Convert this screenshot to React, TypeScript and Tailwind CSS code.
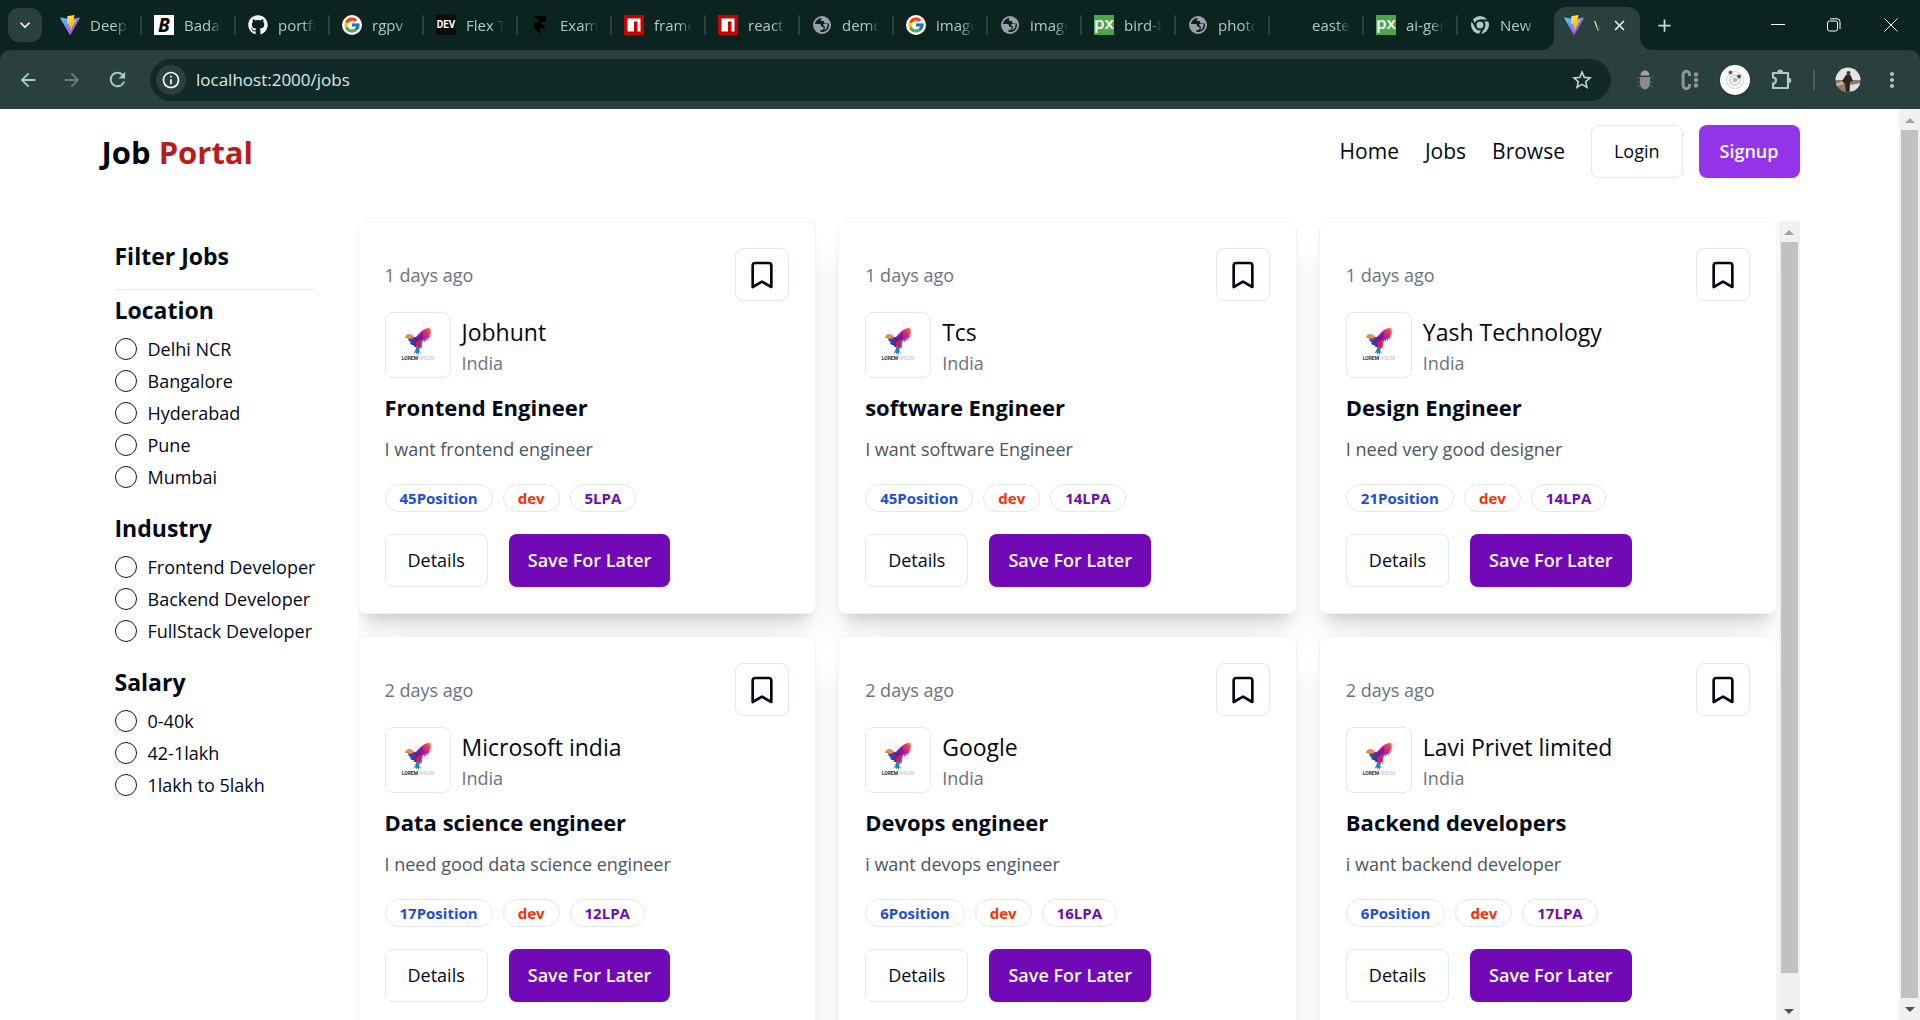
import { Bookmark } from 'lucide-react';
import { FaGithub } from 'react-icons/fa';
import { FcGoogle } from 'react-icons/fc';
import { SiFramer } from 'react-icons/si';
import {
  MdAdd,
  MdArrowBack,
  MdArrowForward,
  MdClose,
  MdInfoOutline,
  MdKeyboardArrowDown,
  MdMoreVert,
  MdRefresh,
  MdStarBorder,
} from 'react-icons/md';

type Tab = { icon: string; title: string };

const tabs: Tab[] = [
  { icon: 'vite', title: 'Deepa' },
  { icon: 'badal', title: 'Badal' },
  { icon: 'github', title: 'portfo' },
  { icon: 'google', title: 'rgpv' },
  { icon: 'dev', title: 'Flex T' },
  { icon: 'framer', title: 'Exam' },
  { icon: 'npm', title: 'frame' },
  { icon: 'npm', title: 'react-' },
  { icon: 'globe', title: 'demo' },
  { icon: 'google', title: 'image' },
  { icon: 'globe', title: 'image' },
  { icon: 'px', title: 'bird-8' },
  { icon: 'globe', title: 'photo' },
  { icon: 'none', title: 'easte' },
  { icon: 'px', title: 'ai-gen' },
  { icon: 'chrome', title: 'New T' },
];

const filters = [
  { name: 'Location', options: ['Delhi NCR', 'Bangalore', 'Hyderabad', 'Pune', 'Mumbai'] },
  { name: 'Industry', options: ['Frontend Developer', 'Backend Developer', 'FullStack Developer'] },
  { name: 'Salary', options: ['0-40k', '42-1lakh', '1lakh to 5lakh'] },
];

const jobs = [
  { age: '1 days ago', company: 'Jobhunt', title: 'Frontend Engineer', text: 'I want frontend engineer', count: 45, pay: 5 },
  { age: '1 days ago', company: 'Tcs', title: 'software Engineer', text: 'I want software Engineer', count: 45, pay: 14 },
  { age: '1 days ago', company: 'Yash Technology', title: 'Design Engineer', text: 'I need very good designer', count: 21, pay: 14 },
  { age: '2 days ago', company: 'Microsoft india', title: 'Data science engineer', text: 'I need good data science engineer', count: 17, pay: 12 },
  { age: '2 days ago', company: 'Google', title: 'Devops engineer', text: 'i want devops engineer', count: 6, pay: 16 },
  { age: '2 days ago', company: 'Lavi Privet limited', title: 'Backend developers', text: 'i want backend developer', count: 6, pay: 17 },
];

function ViteLogo() {
  return (
    <svg viewBox="0 0 32 32" className="size-5 shrink-0">
      <defs>
        <linearGradient id="viteBody" x1="0" y1="0" x2="0.7" y2="1">
          <stop offset="0" stopColor="#41d1ff" />
          <stop offset="1" stopColor="#bd34fe" />
        </linearGradient>
        <linearGradient id="viteBolt" x1="0.4" y1="0" x2="0.6" y2="1">
          <stop offset="0" stopColor="#ffea83" />
          <stop offset="0.1" stopColor="#ffdd35" />
          <stop offset="1" stopColor="#ffa800" />
        </linearGradient>
      </defs>
      <path fill="url(#viteBody)" d="M31.6 5.3 16.9 31.5a.8.8 0 0 1-1.4 0L.5 5.3a.8.8 0 0 1 .9-1.2l14.7 2.6h.3l14.4-2.6a.8.8 0 0 1 .8 1.2Z" />
      <path fill="url(#viteBolt)" d="M22.9 0 12 2.1a.4.4 0 0 0-.3.4L11 13.8a.4.4 0 0 0 .5.4l3-.7a.4.4 0 0 1 .5.5l-.9 4.4a.4.4 0 0 0 .5.5l1.9-.6a.4.4 0 0 1 .5.5l-1.4 6.9c-.1.4.5.7.7.3l.2-.2 8.9-17.8a.4.4 0 0 0-.4-.6l-3.1.6a.4.4 0 0 1-.5-.5l2-7.1a.4.4 0 0 0-.5-.4Z" />
    </svg>
  );
}

function Favicon({ name }: { name: string }) {
  switch (name) {
    case 'vite':
      return <ViteLogo />;
    case 'badal':
      return <span className="flex size-5 items-center justify-center bg-white text-[19px] leading-5 font-bold text-black italic">B</span>;
    case 'github':
      return <FaGithub className="size-5 text-white" />;
    case 'google':
      return (
        <span className="flex size-5 items-center justify-center rounded-full bg-white">
          <FcGoogle className="size-[18px]" />
        </span>
      );
    case 'dev':
      return <span className="flex size-5 items-center justify-center bg-[#0a0a0a] font-[Roboto] text-[10px] leading-5 font-bold text-white">DEV</span>;
    case 'framer':
      return <SiFramer className="size-[18px] text-black" />;
    case 'npm':
      return (
        <svg viewBox="0 0 20 20" className="size-5">
          <path fill="#cb0000" d="M0 0h20v20H0z" />
          <path fill="#fff" d="M3.5 3.5h13v13h-3v-10H10v10H3.5z" />
        </svg>
      );
    case 'globe':
      return (
        <svg viewBox="0 0 20 20" className="size-5">
          <circle cx="10" cy="10" r="9" fill="#9aa0a6" />
          <path
            fill="#0b2420"
            d="M9.500 3C6 3.200 3.500 6 3 9h4.500c1 0 1.500.6 1.500 1.500s.6 1.500 1.500 1.500h1v1.500c0 .8-.6 1.500-1.500 1.500H8.500v2c5 .8 8.500-2.500 8.500-7 0-.6 0-1-.2-1.500h-3.300c-.8 0-1.500-.7-1.500-1.500V6h-2c-.8 0-1.200-.6-1-1.300Z"
          />
          <path fill="#9aa0a6" d="M11.500 9h4c.3 3-1 5-3.500 6.300l.8-1.800c.3-2-.3-3-1.800-3Z" />
        </svg>
      );
    case 'px':
      return <span className="flex size-5 items-center justify-center bg-[#4ba64b] pb-1 text-[17px] leading-5 font-semibold text-white">px</span>;
    case 'chrome':
      return (
        <svg viewBox="0 0 20 20" className="size-5">
          <circle cx="10" cy="10" r="9" fill="#a9cdc6" />
          <g fill="none" stroke="#0b2420" strokeWidth="2">
            <circle cx="10" cy="10" r="4.500" />
            <path d="M10 5.500h8.500M13.900 12.250l-4.300 7.400M6.100 12.250 1.800 4.850" />
          </g>
        </svg>
      );
    default:
      return null;
  }
}

function BirdLogo() {
  return (
    <svg viewBox="0 0 52 52" className="size-[52px]" role="img" aria-label="Lorem Ipsum company logo">
      <defs>
        <linearGradient id="wing" x1="0" y1="1" x2="1" y2="0">
          <stop offset="0" stopColor="#5a1fa0" />
          <stop offset="0.45" stopColor="#b5179e" />
          <stop offset="0.75" stopColor="#e0405a" />
          <stop offset="1" stopColor="#f79a4b" />
        </linearGradient>
        <linearGradient id="torso" x1="0" y1="0" x2="1" y2="1">
          <stop offset="0" stopColor="#f58a4a" />
          <stop offset="0.35" stopColor="#2c4fa8" />
          <stop offset="1" stopColor="#4a1c8c" />
        </linearGradient>
      </defs>
      <path fill="url(#torso)" d="M14 17c2-2 5-1.500 7 .5l4 1.500 5-1-2 7c-1 2.500-4 3.500-6.500 2.500l1-1c-2.500 0-4-1-4.500-2.500h1.300c-2-1-3.300-3-3.300-5L13.500 19Z" />
      <path fill="#f08a50" d="M13 18.500c.5-3 3.500-4.500 6.500-3 1.500.8 2 1.700 2.500 2.500-1.500 1.500-3.500 2-5.500 1.500l-1.500-1.500Z" />
      <path fill="url(#wing)" d="M22 19c3-1.500 4.500-4 7-6.500 2.500-2.500 6-3.500 10-4l-1.500 1.700 2.500.3-2 1.500 2 .8-2.300 1.200 1.800 1.200-2.500.6 2 2-2.500-.3 1.200 2.600-2.700-1.400.5 3-2.500-2 .2 3.300-2.200-2.500-.5 3-1.700-2-1.800 2.500-5-.5Z" />
      <path fill="#6a1d95" d="M23 19.500c3-1 6-3.500 8-6.500 0 5-2 9-6 10Z" />
      <path fill="#d01f58" d="m24 24 5-4 1 3.500-.5 6.500-1.500-2-.5 3-1.500-3-1.500 1Z" />
      <path fill="#2084c4" d="m24.500 27.500 3 1-.5 3 2.200 2.500-2.200-.8-.2 2.800-1.600-2.300-1 2-.2-2.500-2.500 1.500 1.800-3.500Z" />
      <text x="26" y="41" textAnchor="middle" className="fill-[#333] font-[Roboto] text-[5px] font-bold">
        LOREM <tspan className="fill-[#999] font-light">IPSUM</tspan>
      </text>
    </svg>
  );
}

function BrowserChrome() {
  return (
    <header className="shrink-0 bg-[#0b2420]">
      <div className="flex h-[50px] items-start">
        <button aria-label="Search tabs" className="mt-2 ml-2 flex size-[34px] shrink-0 items-center justify-center rounded-[11px] bg-[#29403d] text-white">
          <MdKeyboardArrowDown className="size-5" />
        </button>
        <div className="flex pt-[7px] pl-2">
          {tabs.map((tab, i) => (
            <button key={i} className="flex h-9 w-[94px] items-center pl-[10px] text-left">
              <span className="mr-[10px] flex size-5 shrink-0 items-center justify-center">
                <Favicon name={tab.icon} />
              </span>
              <span className="w-[38px] overflow-hidden text-[15px] whitespace-nowrap text-[#a9cdc6] [mask-image:linear-gradient(to_right,black_65%,transparent)]">
                {tab.title}
              </span>
              {i < tabs.length - 1 && <span className="ml-3 h-5 w-0.5 rounded bg-[#29403d]" />}
            </button>
          ))}
          <div className="relative flex h-[43px] w-[86px] items-center rounded-t-xl bg-[#29403d] pb-[7px] pl-[10px]">
            <span className="absolute bottom-0 -left-3 size-3 bg-[radial-gradient(circle_at_0_0,transparent_12px,#29403d_12px)]" />
            <span className="absolute -right-3 bottom-0 size-3 bg-[radial-gradient(circle_at_100%_0,transparent_12px,#29403d_12px)]" />
            <ViteLogo />
            <span className="ml-[10px] w-[6px] overflow-hidden text-[15px] text-[#d5e5e2] [mask-image:linear-gradient(to_right,black_40%,transparent)]">V</span>
            <button aria-label="Close tab" className="ml-[11px] text-white">
              <MdClose className="size-[17px]" />
            </button>
          </div>
          <button aria-label="New tab" className="ml-[14px] flex h-9 items-center text-[#c4ddd8]">
            <MdAdd className="size-[21px]" />
          </button>
        </div>
        <div className="ml-auto flex h-[50px] items-center text-white">
          <button aria-label="Minimize" className="flex w-14 justify-center">
            <svg viewBox="0 0 14 14" className="size-[14px]"><path d="M0 6.500h14" stroke="currentColor" /></svg>
          </button>
          <button aria-label="Restore" className="flex w-14 justify-center">
            <svg viewBox="0 0 14 14" className="size-[14px]" fill="none" stroke="currentColor">
              <rect x="0.500" y="3" width="10" height="10" rx="2" />
              <path d="M3 .8h7a3 3 0 0 1 3 3V11" />
            </svg>
          </button>
          <button aria-label="Close window" className="flex w-[58px] justify-center">
            <svg viewBox="0 0 14 14" className="size-[14px]" stroke="currentColor"><path d="m.5.5 13 13m0-13-13 13" /></svg>
          </button>
        </div>
      </div>
      <div className="flex h-[59px] items-center rounded-t-[10px] bg-[#29403d] pr-[16px] pl-[17px] text-[#a9cdc6]">
        <button aria-label="Back"><MdArrowBack className="size-[22px]" /></button>
        <button aria-label="Forward" className="ml-[22px] text-[#68807c]"><MdArrowForward className="size-[22px]" /></button>
        <button aria-label="Reload" className="ml-[23px]"><MdRefresh className="size-[23px]" /></button>
        <div className="ml-[21px] flex h-[42px] grow items-center rounded-full bg-[#112a27] pr-[17px] pl-[6px]">
          <button aria-label="Site information" className="flex size-[30px] shrink-0 items-center justify-center rounded-full bg-[#29403d] text-white">
            <MdInfoOutline className="size-5" />
          </button>
          <input aria-label="Address" defaultValue="localhost:2000/jobs" className="ml-[10px] min-w-0 grow bg-transparent text-[17px] text-[#dde8e6] outline-none" />
          <button aria-label="Bookmark page" className="text-[#c8d0ce]"><MdStarBorder className="size-6" /></button>
        </div>
        <button aria-label="Bug extension" className="ml-[24px]">
          <svg viewBox="0 0 20 24" className="h-6 w-5">
            <path d="M2 9l4 2M2 14h4M2 19l4-2M18 9l-4 2M18 14h-4M18 19l-4-2" stroke="#5d6664" strokeWidth="1" />
            <path d="M5.500 7.500a4.500 5 0 0 1 9 0Z" fill="#a3a3a3" />
            <path d="M5 9h10v6a5 6.500 0 0 1-10 0Z" fill="#8a8a8a" />
          </svg>
        </button>
        <button aria-label="C extension" className="ml-[25px] text-[#8f9795]">
          <svg viewBox="0 0 20 24" className="h-6 w-5">
            <path d="M9.500 8V6.500a3.200 3.200 0 0 0-6.400 0v11a3.200 3.200 0 0 0 6.400 0V16" fill="none" stroke="currentColor" strokeWidth="3" />
            <circle cx="16" cy="6.500" r="2.200" fill="currentColor" />
            <circle cx="16" cy="12" r="2.200" fill="currentColor" />
            <circle cx="16" cy="17.500" r="2.200" fill="currentColor" />
          </svg>
        </button>
        <button aria-label="Orbit extension" className="ml-[20px] rounded-full shadow">
          <svg viewBox="0 0 30 30" className="size-[30px]">
            <circle cx="15" cy="15" r="15" fill="#fff" />
            <circle cx="15" cy="15" r="8.500" fill="none" stroke="#ddd" strokeWidth="1.500" />
            <circle cx="15" cy="15" r="5" fill="none" stroke="#ccc" strokeWidth="1.500" />
            <circle cx="15" cy="15" r="2.500" fill="#bbb" />
            <circle cx="10.500" cy="7.500" r="2" fill="#666" />
            <circle cx="19" cy="11.500" r="2" fill="#555" />
          </svg>
        </button>
        <button aria-label="Extensions" className="ml-[19px]">
          <svg viewBox="0 0 24 24" className="size-6" fill="none" stroke="currentColor" strokeWidth="2.200" strokeLinejoin="round">
            <path d="M4 5h15v15H4v-4.500a3 3 0 0 0 0-6Z" />
            <path d="M9 4.500a2.200 2.200 0 0 1 4.400 0Z M19.500 10.500a2 2 0 0 1 0 4Z" fill="currentColor" strokeWidth="1.500" />
          </svg>
        </button>
        <span className="ml-[20px] h-5 w-0.5 bg-[#45605b]" />
        <button aria-label="Profile" className="ml-[20px]">
          <svg viewBox="0 0 26 26" className="size-[26px]">
            <defs><clipPath id="avatar"><circle cx="13" cy="13" r="12.500" /></clipPath></defs>
            <g clipPath="url(#avatar)">
              <path fill="#e4e3e6" d="M0 0h26v13H0z" />
              <path fill="#8c7d68" d="M0 13h26v13H0z" />
              <path fill="#d3b48b" d="m0 17 11-4v3L0 20Z" />
              <path fill="#dedfe2" d="m15 18 11-2v8H15z" />
              <path fill="#2a2426" d="M11 8c1-1 4-1 5 1l2 5-3 1-1 10h-3l-1-8-3-3Z" />
              <circle cx="13.500" cy="6" r="2" fill="#4a332c" />
            </g>
          </svg>
        </button>
        <button aria-label="Menu" className="ml-[19px]"><MdMoreVert className="size-6" /></button>
      </div>
    </header>
  );
}

function Arrow({ down = false }: { down?: boolean }) {
  return (
    <svg viewBox="0 0 10 5" className="h-[5px] w-[10px] shrink-0">
      {down ? <path d="M0 0h10L5 5z" fill="#505050" /> : <path d="M0 5h10L5 0z" fill="#a3a3a3" />}
    </svg>
  );
}

function FilterPanel() {
  return (
    <aside className="w-[258px] shrink-0 pt-[21px] pr-[43px] pl-[15px]">
      <h1 className="text-[23px] leading-7 font-bold">Filter Jobs</h1>
      <hr className="mt-[19px] border-[#e2e8f0]" />
      <form className="mt-[6px] flex flex-col gap-[25px]">
        {filters.map((group) => (
          <fieldset key={group.name}>
            <legend className="text-[23px] leading-7 font-bold">{group.name}</legend>
            <div className="mt-[13px] flex flex-col gap-2">
              {group.options.map((option) => (
                <label key={option} className="flex h-6 items-center gap-[11px] text-[18px] leading-6 font-medium whitespace-nowrap">
                  <input type="radio" name={group.name} value={option} className="size-[22px] shrink-0 appearance-none rounded-full border border-[#0f172a] checked:border-[7px]" />
                  {option}
                </label>
              ))}
            </div>
          </fieldset>
        ))}
      </form>
    </aside>
  );
}

function JobCard({ job }: { job: (typeof jobs)[number] }) {
  return (
    <article className="rounded-lg border border-[#f3f4f6] bg-white p-[26px] shadow-[0_27px_33px_-7px_rgba(0,0,0,0.1),0_11px_13px_-8px_rgba(0,0,0,0.15)]">
      <div className="flex items-center justify-between">
        <p className="text-[18px] leading-6 text-[#6b7280]">{job.age}</p>
        <button aria-label="Bookmark job" className="flex h-[53px] w-[54px] items-center justify-center rounded-lg border border-[#e2e8f0]">
          <Bookmark className="size-8" />
        </button>
      </div>
      <div className="mt-[11px] flex items-end gap-[11px]">
        <div className="flex size-[66px] items-center justify-center rounded-lg border border-[#e2e8f0]">
          <BirdLogo />
        </div>
        <div>
          <h2 className="text-[23px] leading-8 font-medium">{job.company}</h2>
          <p className="text-[18px] leading-[30px] text-[#6b7280]">India</p>
        </div>
      </div>
      <h3 className="mt-[15px] text-[22px] leading-7 font-bold">{job.title}</h3>
      <p className="mt-4 text-[18px] leading-6 text-[#4b5563]">{job.text}</p>
      <div className="mt-[23px] flex gap-[10px] text-[15px] font-bold">
        <span className="flex h-7 items-center rounded-full border border-[#e2e8f0] px-[14px] text-[#1d4ed8]">{job.count}Position</span>
        <span className="flex h-7 items-center rounded-full border border-[#e2e8f0] px-[14px] text-[#f83002]">dev</span>
        <span className="flex h-7 items-center rounded-full border border-[#e2e8f0] px-[14px] text-[#7209b7]">{job.pay}LPA</span>
      </div>
      <div className="mt-[22px] flex gap-[21px] text-[18px]">
        <button className="h-[53px] rounded-lg border border-[#e2e8f0] px-[22px] font-medium">Details</button>
        <button className="h-[53px] rounded-lg bg-[#7209b7] px-[19px] font-semibold text-[#f8fafc]">Save For Later</button>
      </div>
    </article>
  );
}

export default function App() {
  return (
    <div className="flex h-screen flex-col overflow-hidden bg-white font-['Open_Sans',sans-serif] text-[#020817]">
      <BrowserChrome />
      <div className="flex min-h-0 grow">
        <div className="flex min-w-0 grow flex-col">
          <div className="mx-auto flex min-h-0 w-full max-w-[1700px] grow flex-col">
            <div className="flex shrink-0 items-center justify-between py-4">
              <h1 className="pl-0.5 text-[31px] leading-9 font-bold">
                Job <span className="text-[#b91c1c]">Portal</span>
              </h1>
              <div className="flex items-center">
                <nav className="flex gap-[26px] text-[21px] font-medium">
                  <a href="#home">Home</a>
                  <a href="#jobs">Jobs</a>
                  <a href="#browse">Browse</a>
                </nav>
                <button className="ml-[26px] h-[53px] rounded-lg border border-[#e2e8f0] px-[22px] text-[18px] font-medium">Login</button>
                <button className="ml-4 h-[53px] rounded-lg bg-[#9333ea] px-[21px] text-[18px] font-semibold text-[#f8fafc]">Signup</button>
              </div>
            </div>
            <div className="mt-[27px] flex min-h-0 grow">
              <FilterPanel />
              <div className="grid min-w-0 grow grid-cols-3 content-start gap-[22px] overflow-hidden pr-px">
                {jobs.map((job) => (
                  <JobCard key={job.company} job={job} />
                ))}
              </div>
              <div className="flex w-[21px] shrink-0 flex-col items-center bg-[#f0f0f0] pt-[9px] pb-[6px]">
                <Arrow />
                <div className="mt-[7px] mb-[36px] w-[17px] grow bg-[#c1c1c1]" />
                <Arrow down />
              </div>
            </div>
          </div>
        </div>
        <div className="flex w-[21px] shrink-0 flex-col items-center bg-[#f0f0f0] pt-[9px] pb-[8px]">
          <Arrow />
          <div className="mt-[7px] mb-[9px] w-[17px] grow bg-[#c1c1c1]" />
          <Arrow down />
        </div>
      </div>
    </div>
  );
}
